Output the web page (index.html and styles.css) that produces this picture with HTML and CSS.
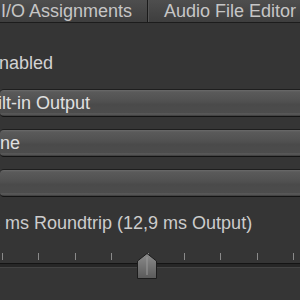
FILE: index.html
```html
<!DOCTYPE html>
<html lang="en">
<head>
  <meta charset="UTF-8">
  <title>Audio Preferences</title>
  <link rel="stylesheet" href="styles.css">
</head>
<body>
  <!-- Tab bar -->
  <div class="tabs">
    <div class="tab tab-left">I/O Assignments</div>
    <div class="tab tab-right">Audio File Editor</div>
  </div>

  <div class="panel">
    <!-- Enabled checkbox (box is out of view) -->
    <div class="check-row"><span class="cut-enabled">Enabled</span></div>

    <!-- Device popups -->
    <div class="popup first"><span class="cut-builtin">Built-in Output</span></div>
    <div class="popup"><span class="cut-none">None</span></div>
    <div class="popup"></div>

    <!-- Latency -->
    <div class="latency"><span class="cut-latency">24,4 ms Roundtrip (12,9 ms Output)</span></div>

    <div class="slider">
      <div class="ticks">
        <i></i><i></i><i></i><i></i><i></i><i></i><i></i><i></i><i></i>
      </div>
      <div class="track"></div>
      <svg class="knob" width="20" height="26" viewBox="0 0 20 26">
        <defs>
          <linearGradient id="kg" x1="0" y1="0" x2="0" y2="1">
            <stop offset="0" stop-color="#8c8c8c"/>
            <stop offset="1" stop-color="#5a5a5a"/>
          </linearGradient>
        </defs>
        <polygon points="10,0.5 19.5,8 19.5,25.5 0.5,25.5 0.5,8" fill="url(#kg)" stroke="#1c1c1c"/>
        <line x1="10" y1="4" x2="10" y2="22" stroke="#9a9a9a" stroke-width="1"/>
      </svg>
    </div>

    <div class="bottom-row"><span class="cut-bit">24-Bit Recording</span></div>
  </div>
</body>
</html>
```

FILE: styles.css
```css
body {
  margin: 0;
  width: 300px;
  height: 300px;
  overflow: hidden;
  background: #353535;
  font-family: 'Liberation Sans', Arial, sans-serif;
  font-size: 18px;
  color: #d2d2d2;
}

.tabs {
  display: flex;
  height: 22px;
  border-bottom: 1px solid #1c1c1c;
  background: linear-gradient(#4e4e4e, #3e3e3e);
}

.tab {
  line-height: 22px;
  color: #c6c6c6;
  white-space: nowrap;
}

.tab-left {
  flex: 0 0 148px;
  display: flex;
  justify-content: flex-end;
  padding-right: 15px;
  box-sizing: border-box;
  border-right: 1px solid #1a1a1a;
}

.tab-right {
  flex: 1;
  padding-left: 15px;
  border-left: 1px solid #555;
}

.panel {
  display: flex;
  flex-direction: column;
}

.check-row {
  line-height: 20px;
  height: 20px;
  margin-top: 30px;
  white-space: nowrap;
}

.cut-enabled {
  margin-left: -13px;
}

.popup {
  height: 26px;
  margin-top: 12px;
  border-top: 1px solid #1e1e1e;
  border-bottom: 1px solid #141414;
  border-radius: 4px 0 0 4px;
  background: linear-gradient(#6a6a6a 0, #5a5a5a 2px, #505050 45%, #4a4a4a 55%, #4c4c4c 88%, #5e5e5e 92%, #3a3a3a 100%);
  line-height: 26px;
  color: #e0e0e0;
  white-space: nowrap;
  overflow: hidden;
  flex-shrink: 0;
}

.popup.first {
  margin-top: 16px;
}

.cut-builtin {
  margin-left: -24px;
}

.cut-none {
  margin-left: -23px;
}

.latency {
  margin-top: 16px;
  line-height: 20px;
  height: 20px;
  color: #cccccc;
  white-space: nowrap;
}

.cut-latency {
  margin-left: -35px;
}

.slider {
  position: relative;
  height: 40px;
  padding-top: 20px;
  flex-shrink: 0;
}

.ticks {
  display: flex;
  gap: 35.4px;
  padding-left: 2px;
  height: 7px;
}

.ticks i {
  width: 1px;
  height: 7px;
  background: #8a8a8a;
}

.track {
  margin-top: 3px;
  height: 3px;
  border-top: 1px solid #141414;
  border-bottom: 1px solid #444;
  background: #262626;
}

.knob {
  position: absolute;
  left: 137px;
  top: 20px;
}

.bottom-row {
  line-height: 20px;
  height: 20px;
  margin-top: 4px;
  white-space: nowrap;
  flex-shrink: 0;
}

.cut-bit {
  margin-left: 4px;
}
```
